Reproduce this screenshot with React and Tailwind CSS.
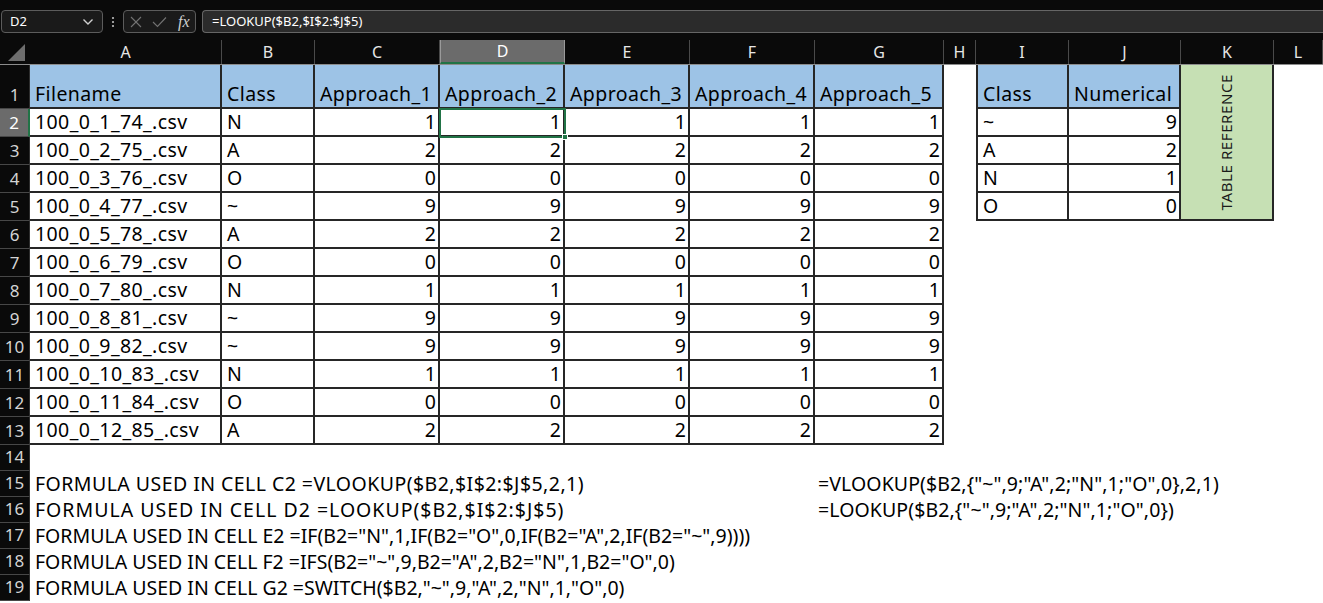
import React from "react";

const COLS =
  "grid grid-cols-[30px_192px_93px_125px_125px_125px_125px_129px_32px_93px_112px_93px_1fr]";

const data = [
  ["100_0_1_74_.csv", "N", 1],
  ["100_0_2_75_.csv", "A", 2],
  ["100_0_3_76_.csv", "O", 0],
  ["100_0_4_77_.csv", "~", 9],
  ["100_0_5_78_.csv", "A", 2],
  ["100_0_6_79_.csv", "O", 0],
  ["100_0_7_80_.csv", "N", 1],
  ["100_0_8_81_.csv", "~", 9],
  ["100_0_9_82_.csv", "~", 9],
  ["100_0_10_83_.csv", "N", 1],
  ["100_0_11_84_.csv", "O", 0],
  ["100_0_12_85_.csv", "A", 2],
];
const ref = [
  ["~", 9],
  ["A", 2],
  ["N", 1],
  ["O", 0],
];

function RowHead({ n, selected }) {
  return (
    <div
      className={
        "flex items-end justify-center border-b border-[#474747] text-[17px] leading-[26px] tracking-normal " +
        (selected
          ? "bg-[#6b6b6b] text-white border-r-2 border-r-[#217346]"
          : "bg-[#0a0a0a] text-[#d4d4d4] border-r border-r-[#2e2e2e]")
      }
    >
      {n}
    </div>
  );
}

const bd = "border-r-2 border-b-2 border-[#262626]";

function TextCell({ children, blue, extra = "" }) {
  return (
    <div
      className={
        "flex items-end pl-[5px] text-[19.5px] leading-[26px] tracking-[0.4px] text-black whitespace-nowrap overflow-hidden " +
        bd +
        " " +
        (blue ? "bg-[#9dc3e6]" : "bg-white") +
        " " +
        extra
      }
    >
      {children}
    </div>
  );
}

function NumCell({ children, extra = "" }) {
  return (
    <div
      className={
        "flex items-end justify-end pr-[2px] text-[19.5px] leading-[26px] text-black bg-white " +
        bd +
        " " +
        extra
      }
    >
      {children}
    </div>
  );
}

function Blank({ span = "" }) {
  return <div className={"bg-white " + span}></div>;
}

function Line({ children, cls }) {
  return (
    <div
      className={
        cls +
        " flex items-center text-[19.5px] leading-[26px] text-black whitespace-nowrap"
      }
    >
      {children}
    </div>
  );
}

export default function App() {
  const headers = ["A", "B", "C", "D", "E", "F", "G", "H", "I", "J", "K", "L"];
  return (
    <div className="w-[1323px] h-[603px] overflow-hidden bg-white font-['Noto_Sans','Open_Sans',sans-serif]">
      {/* Formula bar */}
      <div className="h-[40px] bg-[#0a0a0a] flex items-start pt-[10px]">
        <div className="ml-[1px] w-[102px] h-[23px] rounded-[4px] border border-[#5c5c5c] bg-[#1a1a1a] flex items-center justify-between pl-[8px] pr-[8px]">
          <span className="text-[13px] text-white leading-none">D2</span>
          <svg width="12" height="8" viewBox="0 0 12 8">
            <polyline points="1.5,1.5 6,6 10.5,1.5" fill="none" stroke="#d0d0d0" strokeWidth="1.4" />
          </svg>
        </div>
        <div className="w-[20px] h-[23px] flex items-center justify-center">
          <svg width="4" height="12" viewBox="0 0 4 12">
            <circle cx="2" cy="2" r="1.1" fill="#bdbdbd" />
            <circle cx="2" cy="6" r="1.1" fill="#bdbdbd" />
            <circle cx="2" cy="10" r="1.1" fill="#bdbdbd" />
          </svg>
        </div>
        <div className="w-[73px] h-[23px] rounded-[4px] border border-[#5c5c5c] bg-[#1a1a1a] flex items-center pl-[6px]">
          <svg width="12" height="12" viewBox="0 0 12 12">
            <line x1="1" y1="1" x2="11" y2="11" stroke="#727272" strokeWidth="1.1" />
            <line x1="11" y1="1" x2="1" y2="11" stroke="#727272" strokeWidth="1.1" />
          </svg>
          <svg width="15" height="12" viewBox="0 0 15 12" className="ml-[10px]">
            <polyline points="1,6 5.5,10.5 14,1.5" fill="none" stroke="#727272" strokeWidth="1.1" />
          </svg>
          <span className="ml-[11px] text-[16px] italic text-[#d0d0d0] leading-none font-['Liberation_Serif',serif]">
            fx
          </span>
        </div>
        <div className="ml-[6px] flex-1 h-[23px] border border-r-0 border-[#666666] rounded-l-[4px] bg-[#2b2b2b] flex items-center pl-[9px]">
          <span className="text-[13px] text-white leading-none">=LOOKUP($B2,$I$2:$J$5)</span>
        </div>
      </div>

      {/* Column headers */}
      <div className={COLS + " h-[25px] bg-[#0a0a0a] border-b border-[#8c8c8c]"}>
        <div className="flex items-end justify-end pr-[4px] pb-[2px]">
          <svg width="18" height="18" viewBox="0 0 18 18">
            <polygon points="17,0 17,17 0,17" fill="#6e6e6e" />
          </svg>
        </div>
        {headers.map((h) => (
          <div
            key={h}
            className={
              "flex items-center justify-center text-[16px] leading-none " +
              (h === "D"
                ? "bg-[#6b6b6b] text-white border-b-2 border-[#217346] border-l border-l-[#9a9a9a] border-r border-r-[#9a9a9a]"
                : "text-[#e6e6e6] border-r border-[#4a4a4a]")
            }
          >
            {h}
          </div>
        ))}
      </div>

      {/* Sheet */}
      <div className={COLS + " grid-rows-[44px_repeat(12,28px)_repeat(6,26px)]"}>
        {/* Row 1 */}
        <RowHead n={1} />
        <TextCell blue>Filename</TextCell>
        <TextCell blue>Class</TextCell>
        <TextCell blue>Approach_1</TextCell>
        <TextCell blue>Approach_2</TextCell>
        <TextCell blue>Approach_3</TextCell>
        <TextCell blue>Approach_4</TextCell>
        <TextCell blue>Approach_5</TextCell>
        <Blank />
        <TextCell blue extra="border-l-2">Class</TextCell>
        <TextCell blue>Numerical</TextCell>
        <div className={"row-span-5 bg-[#c6e0b4] flex items-center justify-center " + bd}>
          <span className="[writing-mode:vertical-rl] rotate-180 text-[15px] tracking-[0.6px] text-[#1a1a1a] leading-none whitespace-nowrap">
            TABLE REFERENCE
          </span>
        </div>
        <Blank />

        {data.map((r, i) => {
          const rowNo = i + 2;
          return (
            <React.Fragment key={rowNo}>
              <RowHead n={rowNo} selected={rowNo === 2} />
              <TextCell>{r[0]}</TextCell>
              <TextCell>{r[1]}</TextCell>
              <NumCell>{r[2]}</NumCell>
              <div className="relative">
                <NumCell extra="h-full">{r[2]}</NumCell>
                {rowNo === 2 && (
                  <div className="absolute left-[-1px] top-[-1px] right-[-1px] bottom-[-1px] border-2 border-[#217346] z-10">
                    <div className="absolute right-[-4px] bottom-[-4px] w-[6px] h-[6px] bg-[#217346] border border-white"></div>
                  </div>
                )}
              </div>
              <NumCell>{r[2]}</NumCell>
              <NumCell>{r[2]}</NumCell>
              <NumCell>{r[2]}</NumCell>
              <Blank />
              {i < 4 ? (
                <>
                  <TextCell extra="border-l-2">{ref[i][0]}</TextCell>
                  <NumCell>{ref[i][1]}</NumCell>
                  <Blank />
                </>
              ) : (
                <Blank span="col-span-4" />
              )}
            </React.Fragment>
          );
        })}

        {/* Row 14 */}
        <RowHead n={14} />
        <Blank span="col-span-12" />

        {/* Row 15 */}
        <RowHead n={15} />
        <Line cls="col-span-6 pl-[5px] tracking-[0.45px]">
          FORMULA USED IN CELL C2 =VLOOKUP($B2,$I$2:$J$5,2,1)
        </Line>
        <Line cls="col-span-6 pl-[3px] tracking-[0.1px]">
          =VLOOKUP($B2,{"{"}"~",9;"A",2;"N",1;"O",0{"}"},2,1)
        </Line>

        {/* Row 16 */}
        <RowHead n={16} />
        <Line cls="col-span-6 pl-[5px] tracking-[1px]">
          FORMULA USED IN CELL D2 =LOOKUP($B2,$I$2:$J$5)
        </Line>
        <Line cls="col-span-6 pl-[3px] tracking-[0.1px]">
          =LOOKUP($B2,{"{"}"~",9;"A",2;"N",1;"O",0{"}"})
        </Line>

        {/* Row 17 */}
        <RowHead n={17} />
        <Line cls="col-span-12 pl-[5px] tracking-normal">
          FORMULA USED IN CELL E2 =IF(B2="N",1,IF(B2="O",0,IF(B2="A",2,IF(B2="~",9))))
        </Line>

        {/* Row 18 */}
        <RowHead n={18} />
        <Line cls="col-span-12 pl-[5px] tracking-normal">
          FORMULA USED IN CELL F2 =IFS(B2="~",9,B2="A",2,B2="N",1,B2="O",0)
        </Line>

        {/* Row 19 */}
        <RowHead n={19} />
        <Line cls="col-span-12 pl-[5px] tracking-normal">
          FORMULA USED IN CELL G2 =SWITCH($B2,"~",9,"A",2,"N",1,"O",0)
        </Line>
      </div>
    </div>
  );
}
